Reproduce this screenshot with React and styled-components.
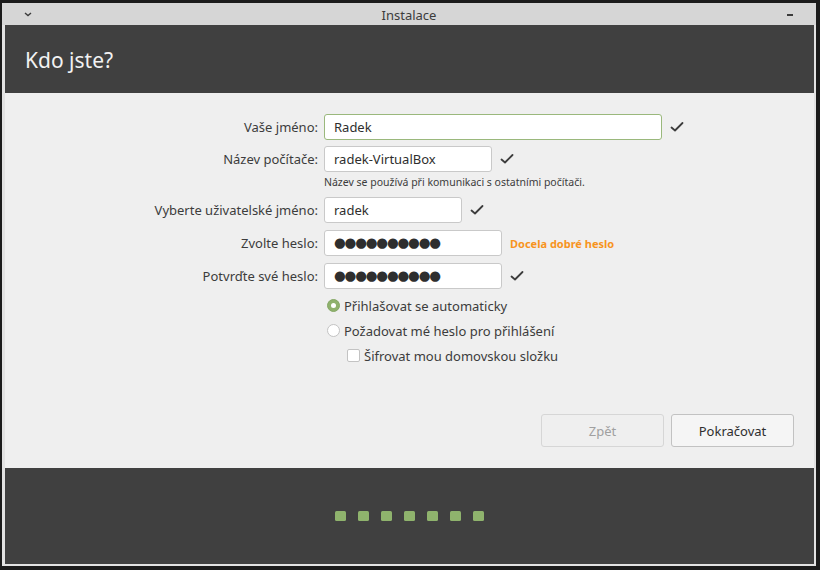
import React from 'react';
import styled, { createGlobalStyle } from 'styled-components';

const Global = createGlobalStyle`
  html, body {
    margin: 0;
    padding: 0;
    background: #1b1b1b;
    font-family: "Noto Sans", "Open Sans", sans-serif;
  }
`;

const Desktop = styled.div`
  width: 820px;
  height: 570px;
  padding: 3px 4px 4px 2px;
  box-sizing: border-box;
`;

const Window = styled.div`
  height: 563px;
  background: #e2e2e2;
  display: flex;
  flex-direction: column;
  padding: 0 2px 2px 3px;
  box-sizing: border-box;
`;

const TitleBar = styled.div`
  height: 22px;
  margin: 0 -2px 0 -3px;
  background: #d6d6d6;
  display: flex;
  align-items: center;
  justify-content: space-between;
  padding: 1px 18px 0 18px;
  box-sizing: border-box;
  color: #3c3c3c;
  font-size: 13px;
`;

const TitleBtn = styled.div`
  width: 16px;
  display: flex;
  justify-content: center;
`;

const Header = styled.div`
  height: 68px;
  background: #404040;
  color: #f2f2f2;
  font-size: 21px;
  display: flex;
  align-items: center;
  padding-left: 20px;
  padding-top: 2px;
  box-sizing: border-box;
`;

const Content = styled.div`
  height: 375px;
  background: #efefef;
  display: flex;
  flex-direction: column;
  padding: 21px 20px 21px 0;
  box-sizing: border-box;
`;

const Form = styled.div`
  display: grid;
  grid-template-columns: 313px 1fr;
  column-gap: 6px;
  align-items: center;
  font-size: 13px;
  color: #3c3c3c;
`;

const Label = styled.div`
  text-align: right;
  height: 26px;
  line-height: 26px;
  margin-bottom: ${p => p.$mb ?? 7}px;
`;

const Field = styled.div`
  display: flex;
  align-items: center;
  gap: 8px;
  height: 26px;
  margin-bottom: ${p => p.$mb ?? 7}px;
`;

const Input = styled.div`
  width: ${p => p.$w}px;
  height: 26px;
  box-sizing: border-box;
  background: #ffffff;
  border: 1px solid ${p => (p.$focus ? '#9ab87c' : '#c9c9c9')};
  border-radius: 3px;
  padding: 0 9px;
  display: flex;
  align-items: center;
  font-size: 13px;
  color: #2e2e2e;
`;

const Dots = styled.span`
  font-family: "DejaVu Sans", sans-serif;
  font-size: 13.5px;
  letter-spacing: -1.2px;
  color: #2e2e2e;
  line-height: 1;
`;

const Hint = styled.div`
  grid-column: 2;
  font-size: 10.5px;
  color: #3c3c3c;
  margin: 3px 0 8px;
  height: 14px;
`;

const Strength = styled.span`
  color: #f7941e;
  font-size: 11px;
  font-weight: bold;
`;

const Options = styled.div`
  margin-left: 322px;
  margin-top: 3px;
  display: flex;
  flex-direction: column;
  font-size: 13px;
  color: #3c3c3c;
`;

const Option = styled.div`
  display: flex;
  align-items: center;
  gap: 4px;
  height: 25px;
  padding-left: ${p => p.$indent || 0}px;
`;

const Radio = styled.span`
  width: 13px;
  height: 13px;
  border-radius: 50%;
  box-sizing: border-box;
  background: ${p => (p.$on ? '#8fb16d' : '#ffffff')};
  border: 1px solid ${p => (p.$on ? '#85a865' : '#c3c3c3')};
  display: flex;
  align-items: center;
  justify-content: center;
  &::after {
    content: '';
    width: 5px;
    height: 5px;
    border-radius: 50%;
    background: ${p => (p.$on ? '#ffffff' : 'transparent')};
  }
`;

const Check = styled.span`
  width: 13px;
  height: 13px;
  box-sizing: border-box;
  background: #ffffff;
  border: 1px solid #c3c3c3;
  border-radius: 2px;
`;

const Spacer = styled.div`
  flex: 1;
`;

const Buttons = styled.div`
  display: flex;
  justify-content: flex-end;
  gap: 7px;
`;

const Button = styled.div`
  width: 123px;
  height: 33px;
  box-sizing: border-box;
  border: 1px solid ${p => (p.$disabled ? '#d6d6d6' : '#c2c2c2')};
  border-radius: 3px;
  background: ${p => (p.$disabled ? '#efefef' : '#f5f5f5')};
  color: ${p => (p.$disabled ? '#a0a0a0' : '#2e2e2e')};
  font-size: 13px;
  display: flex;
  align-items: center;
  justify-content: center;
`;

const Footer = styled.div`
  flex: 1;
  background: #404040;
  display: flex;
  justify-content: center;
  align-items: center;
  gap: 12px;
`;

const Step = styled.span`
  width: 11px;
  height: 10px;
  border-radius: 1.5px;
  background: #8fb36d;
`;

const Tick = () => (
  <svg width="14" height="12" viewBox="0 0 14 12">
    <path d="M1.5 6.5 L5 9.5 L12.5 2" fill="none" stroke="#3c3c3c" strokeWidth="1.8" strokeLinecap="round" strokeLinejoin="round" />
  </svg>
);

const App = () => {
  return (
    <>
      <Global />
      <Desktop>
        <Window>
          <TitleBar>
            <TitleBtn>
              <svg width="8" height="5" viewBox="0 0 8 5">
                <path d="M1 1 L4 3.5 L7 1" fill="none" stroke="#3c3c3c" strokeWidth="1.4" />
              </svg>
            </TitleBtn>
            <span>Instalace</span>
            <TitleBtn>
              <svg width="6" height="2" viewBox="0 0 6 2">
                <rect width="6" height="2" fill="#3c3c3c" />
              </svg>
            </TitleBtn>
          </TitleBar>
          <Header>Kdo jste?</Header>
          <Content>
            <Form>
              <Label $mb={6}>Vaše jméno:</Label>
              <Field $mb={6}>
                <Input $w={338} $focus>Radek</Input>
                <Tick />
              </Field>

              <Label $mb={0}>Název počítače:</Label>
              <Field $mb={0}>
                <Input $w={168}>radek-VirtualBox</Input>
                <Tick />
              </Field>
              <Hint>Název se používá při komunikaci s ostatními počítači.</Hint>

              <Label>Vyberte uživatelské jméno:</Label>
              <Field>
                <Input $w={138}>radek</Input>
                <Tick />
              </Field>

              <Label>Zvolte heslo:</Label>
              <Field>
                <Input $w={178}><Dots>●●●●●●●●●●</Dots></Input>
                <Strength>Docela dobré heslo</Strength>
              </Field>

              <Label $mb={1}>Potvrďte své heslo:</Label>
              <Field $mb={1}>
                <Input $w={178}><Dots>●●●●●●●●●●</Dots></Input>
                <Tick />
              </Field>
            </Form>
            <Options>
              <Option>
                <Radio $on />
                Přihlašovat se automaticky
              </Option>
              <Option>
                <Radio />
                Požadovat mé heslo pro přihlášení
              </Option>
              <Option $indent={20}>
                <Check />
                Šifrovat mou domovskou složku
              </Option>
            </Options>
            <Spacer />
            <Buttons>
              <Button $disabled>Zpět</Button>
              <Button>Pokračovat</Button>
            </Buttons>
          </Content>
          <Footer>
            {[0, 1, 2, 3, 4, 5, 6].map(i => (
              <Step key={i} />
            ))}
          </Footer>
        </Window>
      </Desktop>
    </>
  );
};

export default App;
